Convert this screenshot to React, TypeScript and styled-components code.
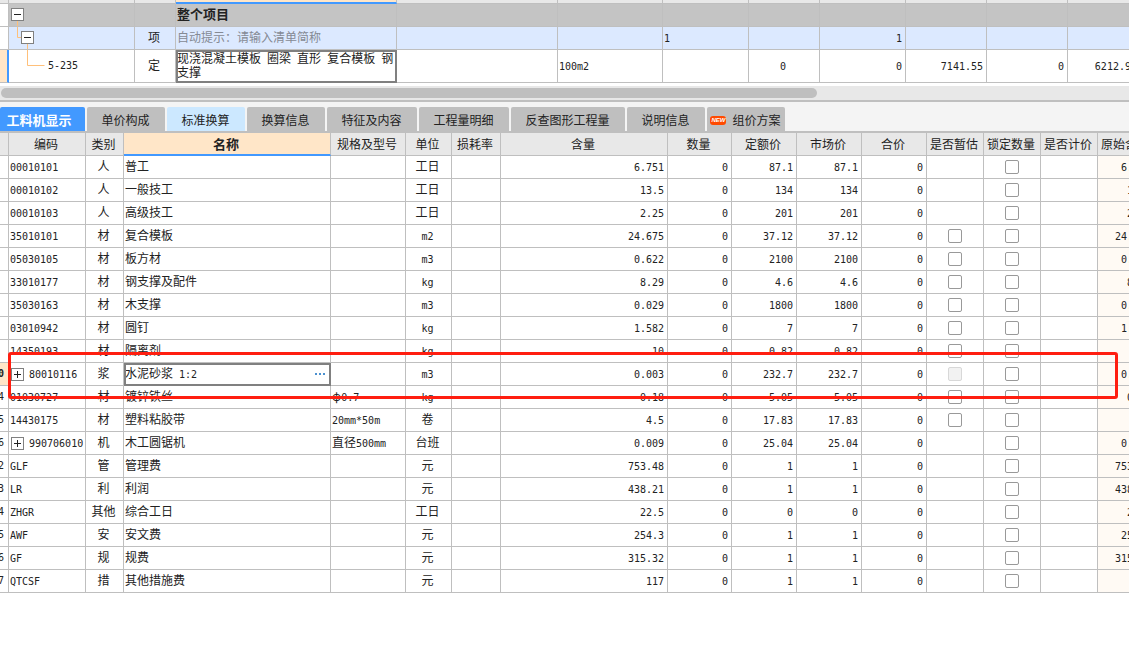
import React from "react";
import styled, { createGlobalStyle, css } from "styled-components";

const LINE = "#bfbfbf";
const BLUE = "#4299ff";
const CREAM = "#ffe6c8";

const GlobalStyle = createGlobalStyle`
  * { box-sizing: border-box; }
  body {
    margin: 0;
    background: #fff;
    color: #222;
    font: 12px/14px "Noto Sans CJK SC", "Noto Sans", sans-serif;
    overflow: hidden;
  }
`;

const Latin = styled.span`
  font-family: "DejaVu Sans Mono", monospace;
  font-size: 10px;
  line-height: 10px;
`;

/* Half-width characters take half the advance of a Chinese one. */
const Txt = ({ children }: { children: string }) => (
  <>
    {children.split(/([ -~]+)/).map((part, i) =>
      i % 2 ? <Latin key={i}>{part}</Latin> : part
    )}
  </>
);

const Page = styled.main`
  display: flex;
  flex-direction: column;
  width: 100%;
`;

const Pane = styled.section`
  position: relative;
  overflow: hidden;
`;

const Grid = styled.table<{ $width: number }>`
  width: ${(p) => p.$width}px;
  min-width: 100%;
  table-layout: fixed;
  border-collapse: separate;
  border-spacing: 0;
`;

type Align = "left" | "center" | "right";

const Cell = styled.td<{ $align?: Align; $bg?: string; $editing?: boolean }>`
  padding: ${(p) => (p.$align === "center" ? "0 2px 2px 0" : "0 3px 2px 1px")};
  border-right: 1px solid ${LINE};
  border-bottom: 1px solid ${LINE};
  background: ${(p) => p.$bg || "transparent"};
  text-align: ${(p) => p.$align || "left"};
  white-space: nowrap;
  overflow: hidden;
  vertical-align: middle;
  ${(p) =>
    p.$editing &&
    css`
      outline: 2px solid #808080;
      outline-offset: -2px;
    `}
`;

const Row = styled.tr<{ $height: number; $bg?: string }>`
  height: ${(p) => p.$height}px;
  background: ${(p) => p.$bg || "#fff"};
`;

const HeadCell = styled.th<{ $active?: boolean }>`
  padding: 0 2px 0 0;
  border-right: 1px solid ${LINE};
  border-bottom: ${(p) => (p.$active ? `2px solid ${BLUE}` : `1px solid ${LINE}`)};
  background: ${(p) => (p.$active ? CREAM : "#e8e8e8")};
  font-size: ${(p) => (p.$active ? 13 : 12)}px;
  font-weight: ${(p) => (p.$active ? 700 : 400)};
  white-space: nowrap;
  overflow: hidden;
`;

const RowNumber = styled(Cell)<{ $current?: boolean }>`
  padding: 0 4px 0 0;
  background: ${(p) => (p.$current ? CREAM : "#fff")};
  font-weight: ${(p) => (p.$current ? 700 : 400)};
`;

const NumberText = styled.div`
  display: flex;
  justify-content: flex-end;
`;

const Marker = styled(Cell)<{ $current?: boolean }>`
  background: ${(p) => (p.$current ? CREAM : "#fff")};
  ${(p) => p.$current && css`border-right: 2px solid ${BLUE};`}
`;

const Hint = styled.span`
  color: #858a94;
`;

const Title = styled.strong`
  font-size: 13px;
`;

const Wrapped = styled.div`
  margin-right: -3px;
  white-space: normal;
`;

const TreeCell = styled(Cell)`
  padding: 0;
`;

const Tree = styled.svg`
  display: block;
`;

const CodeLine = styled.div`
  display: flex;
  align-items: center;
`;

const Toggle = styled.button`
  display: grid;
  place-items: center;
  flex: none;
  width: 13px;
  height: 13px;
  margin: 2px 5px 0 1px;
  padding: 0;
  border: 1px solid #808080;
  background: #fff;
`;

const EditLine = styled.div`
  display: flex;
  align-items: center;
  justify-content: space-between;
`;

const MoreButton = styled.button`
  display: flex;
  gap: 2px;
  padding: 2px 2px 0;
  border: 0;
  background: none;
`;

const Dot = styled.span`
  width: 2px;
  height: 2px;
  background: #4a90d0;
`;

const ScrollTrack = styled.div`
  margin-top: 3px;
  padding: 2px 1px;
  height: 14px;
  background: #e8e8e8;
`;

const ScrollThumb = styled.div`
  width: 72.4%;
  height: 10px;
  border-radius: 5px;
  background: #bfbfbf;
`;

const TabBar = styled.nav`
  display: flex;
  align-items: flex-end;
  gap: 2px;
  height: 33px;
  border-top: 2px solid ${LINE};
  border-bottom: 2px solid ${LINE};
  background: #f4f4f4;
`;

const Tab = styled.button<{ $kind?: "active" | "hover"; $width: number }>`
  display: flex;
  align-items: center;
  justify-content: center;
  gap: 6px;
  width: ${(p) => p.$width}px;
  height: 24px;
  padding: ${(p) => (p.$kind === "active" ? "2px 7px 0 0" : "2px 1px 0 0")};
  border: 0;
  border-radius: 2px 2px 0 0;
  background: ${(p) =>
    p.$kind === "active" ? BLUE : p.$kind === "hover" ? "#cce8ff" : "#bfbfbf"};
  color: ${(p) => (p.$kind === "active" ? "#fff" : "#222")};
  font: inherit;
  font-weight: ${(p) => (p.$kind === "active" ? 700 : 400)};
  font-size: ${(p) => (p.$kind === "active" ? 13 : 12)}px;
  white-space: nowrap;
`;

const Badge = styled.span`
  width: 16px;
  height: 9px;
  border-radius: 3px;
  background: #ff4a00;
  color: #fff;
  font: italic 700 6px/9px "Liberation Sans", sans-serif;
  text-align: center;
`;

const Check = styled.input`
  appearance: none;
  display: block;
  width: 14px;
  height: 14px;
  margin: 2px auto 0;
  border: 1px solid #999;
  border-radius: 2px;
  background: #fff;
  &:disabled {
    border-color: #d8d8d8;
    background: #f2f2f2;
  }
`;

const CheckCell = styled(Cell)`
  padding: 0 0 2px;
`;

const Highlight = styled.div`
  position: absolute;
  top: 219px;
  left: 8px;
  right: 11px;
  height: 47px;
  border: 3px solid #ff1e10;
  border-radius: 3px;
  pointer-events: none;
`;

const TOP_COLS = [9, 126, 41, 221, 161, 105, 86, 71, 86, 81, 81, 73];
const COLS = [9, 77, 38, 207, 75, 46, 49, 167, 64, 65, 65, 65, 57, 57, 57, 57];
const sum = (list: number[]) => list.reduce((a, b) => a + b, 0);

const HEADERS = ["", "编码", "类别", "名称", "规格及型号", "单位", "损耗率", "含量", "数量", "定额价", "市场价", "合价", "是否暂估", "锁定数量", "是否计价", "原始含量"];

type Item = {
  no: string; code: string; kind: string; name: string; spec?: string;
  unit: string; amount: string; price: string;
  estimate?: "on" | "disabled"; group?: boolean; current?: boolean;
};

const ITEMS: Item[] = [
  { no: "", code: "00010101", kind: "人", name: "普工", unit: "工日", amount: "6.751", price: "87.1" },
  { no: "", code: "00010102", kind: "人", name: "一般技工", unit: "工日", amount: "13.5", price: "134" },
  { no: "", code: "00010103", kind: "人", name: "高级技工", unit: "工日", amount: "2.25", price: "201" },
  { no: "", code: "35010101", kind: "材", name: "复合模板", unit: "m2", amount: "24.675", price: "37.12", estimate: "on" },
  { no: "", code: "05030105", kind: "材", name: "板方材", unit: "m3", amount: "0.622", price: "2100", estimate: "on" },
  { no: "", code: "33010177", kind: "材", name: "钢支撑及配件", unit: "kg", amount: "8.29", price: "4.6", estimate: "on" },
  { no: "", code: "35030163", kind: "材", name: "木支撑", unit: "m3", amount: "0.029", price: "1800", estimate: "on" },
  { no: "", code: "03010942", kind: "材", name: "圆钉", unit: "kg", amount: "1.582", price: "7", estimate: "on" },
  { no: "", code: "14350193", kind: "材", name: "隔离剂", unit: "kg", amount: "10", price: "0.82", estimate: "on" },
  { no: "0", code: "80010116", kind: "浆", name: "水泥砂浆 1:2", unit: "m3", amount: "0.003", price: "232.7", estimate: "disabled", group: true, current: true },
  { no: "4", code: "01030727", kind: "材", name: "镀锌铁丝", spec: "φ0.7", unit: "kg", amount: "0.18", price: "5.05", estimate: "on" },
  { no: "5", code: "14430175", kind: "材", name: "塑料粘胶带", spec: "20mm*50m", unit: "卷", amount: "4.5", price: "17.83", estimate: "on" },
  { no: "6", code: "990706010", kind: "机", name: "木工圆锯机", spec: "直径500mm", unit: "台班", amount: "0.009", price: "25.04", group: true },
  { no: "2", code: "GLF", kind: "管", name: "管理费", unit: "元", amount: "753.48", price: "1" },
  { no: "3", code: "LR", kind: "利", name: "利润", unit: "元", amount: "438.21", price: "1" },
  { no: "4", code: "ZHGR", kind: "其他", name: "综合工日", unit: "工日", amount: "22.5", price: "0" },
  { no: "5", code: "AWF", kind: "安", name: "安文费", unit: "元", amount: "254.3", price: "1" },
  { no: "6", code: "GF", kind: "规", name: "规费", unit: "元", amount: "315.32", price: "1" },
  { no: "7", code: "QTCSF", kind: "措", name: "其他措施费", unit: "元", amount: "117", price: "1" },
];

const TABS: { label: string; width: number; kind?: "active" | "hover"; isNew?: boolean }[] = [
  { label: "工料机显示", width: 85, kind: "active" },
  { label: "单价构成", width: 78 },
  { label: "标准换算", width: 78, kind: "hover" },
  { label: "换算信息", width: 78 },
  { label: "特征及内容", width: 90 },
  { label: "工程量明细", width: 90 },
  { label: "反查图形工程量", width: 114 },
  { label: "说明信息", width: 78 },
  { label: "组价方案", width: 78, isNew: true },
];

const Columns = ({ widths }: { widths: number[] }) => (
  <colgroup>
    {widths.map((w, i) => (
      <col key={i} width={w} />
    ))}
  </colgroup>
);

const Num = ({ value, bg }: { value: string; bg?: string }) => (
  <Cell $align="right" $bg={bg}>
    <Txt>{value}</Txt>
  </Cell>
);

const Blank = ({ count }: { count: number }) => (
  <>
    {Array.from({ length: count }, (_, i) => (
      <Cell key={i} />
    ))}
  </>
);

const MinusBox = ({ x, y }: { x: number; y: number }) => (
  <>
    <rect x={x + 0.5} y={y + 0.5} width="12" height="12" fill="#fff" stroke="#808080" />
    <path d={`M${x + 3} ${y + 6.5}h7`} stroke="#222" />
  </>
);

const SliverHead = styled.th<{ $active?: boolean }>`
  height: 4px;
  padding: 0;
  border-right: 1px solid ${LINE};
  border-bottom: ${(p) => (p.$active ? `2px solid ${BLUE}` : `1px solid ${LINE}`)};
  background: ${(p) => (p.$active ? CREAM : "#e8e8e8")};
`;

const ProjectGrid = () => (
  <Pane>
    <Grid $width={sum(TOP_COLS)}>
      <Columns widths={TOP_COLS} />
      <thead>
        <tr>
          {TOP_COLS.map((_, i) => (
            <SliverHead key={i} $active={i === 3} />
          ))}
        </tr>
      </thead>
      <tbody>
        <Row $height={23} $bg="#c4c4c4">
          <Marker />
          <TreeCell>
            <Tree width="125" height="22" fill="none">
              <path d="M8.500 17v5" stroke="#ffc07a" />
              <MinusBox x={2} y={4} />
            </Tree>
          </TreeCell>
          <Cell />
          <Cell><Title>整个项目</Title></Cell>
          <Blank count={8} />
        </Row>
        <Row $height={23} $bg="#dce9ff">
          <Marker />
          <TreeCell>
            <Tree width="125" height="22" fill="none">
              <path d="M8.500 0v10.500h4M18.500 17v5" stroke="#ffc07a" />
              <MinusBox x={12} y={4} />
            </Tree>
          </TreeCell>
          <Cell $align="center">项</Cell>
          <Cell><Hint>自动提示：请输入清单简称</Hint></Cell>
          <Blank count={2} />
          <Cell><Txt>1</Txt></Cell>
          <Cell />
          <Num value="1" />
          <Blank count={3} />
        </Row>
        <Row $height={33}>
          <Marker $current />
          <TreeCell>
            <CodeLine>
              <Tree width="39" height="32" fill="none">
                <path d="M18.500 0v15.500h17" stroke="#ffc07a" />
              </Tree>
              <Txt>5-235</Txt>
            </CodeLine>
          </TreeCell>
          <Cell $align="center">定</Cell>
          <Cell $editing>
            <Wrapped><Txt>现浇混凝土模板 圈梁 直形 复合模板 钢支撑</Txt></Wrapped>
          </Cell>
          <Cell />
          <Cell><Txt>100m2</Txt></Cell>
          <Cell />
          <Cell $align="center"><Txt>0</Txt></Cell>
          <Num value="0" />
          <Num value="7141.55" />
          <Num value="0" />
          <Num value="6212.93" />
        </Row>
      </tbody>
    </Grid>
    <ScrollTrack>
      <ScrollThumb />
    </ScrollTrack>
  </Pane>
);

const ResourceRow = ({ item }: { item: Item }) => (
  <Row $height={23}>
    <RowNumber $current={item.current}>
      <NumberText><Txt>{item.no}</Txt></NumberText>
    </RowNumber>
    <Cell>
      <CodeLine>
        {item.group && (
          <Toggle aria-label={`展开 ${item.code}`}>
            <svg width="9" height="9" fill="none" stroke="#222">
              <path d="M1 4.500h7M4.500 1v7" />
            </svg>
          </Toggle>
        )}
        <span><Txt>{item.code}</Txt></span>
      </CodeLine>
    </Cell>
    <Cell $align="center">{item.kind}</Cell>
    <Cell $editing={item.current}>
      {item.current ? (
        <EditLine>
          <span><Txt>{item.name}</Txt></span>
          <MoreButton aria-label="更多"><Dot /><Dot /><Dot /></MoreButton>
        </EditLine>
      ) : (
        item.name
      )}
    </Cell>
    <Cell><Txt>{item.spec || ""}</Txt></Cell>
    <Cell $align="center"><Txt>{item.unit}</Txt></Cell>
    <Cell />
    <Num value={item.amount} />
    <Num value="0" />
    <Num value={item.price} />
    <Num value={item.price} />
    <Num value="0" />
    <CheckCell>
      {item.estimate && (
        <Check type="checkbox" aria-label={`是否暂估 ${item.code}`} disabled={item.estimate === "disabled"} />
      )}
    </CheckCell>
    <CheckCell>
      <Check type="checkbox" aria-label={`锁定数量 ${item.code}`} />
    </CheckCell>
    <Cell />
    <Num value={item.amount} bg="#fffaf4" />
  </Row>
);

export default function App() {
  return (
    <>
      <GlobalStyle />
      <Page>
        <ProjectGrid />
        <TabBar>
          {TABS.map((tab) => (
            <Tab key={tab.label} $kind={tab.kind} $width={tab.width}>
              {tab.isNew && <Badge>NEW</Badge>}
              {tab.label}
            </Tab>
          ))}
        </TabBar>
        <Pane>
          <Grid $width={sum(COLS)}>
            <Columns widths={COLS} />
            <thead>
              <Row $height={23}>
                {HEADERS.map((label, i) => (
                  <HeadCell key={i} $active={label === "名称"}>{label}</HeadCell>
                ))}
              </Row>
            </thead>
            <tbody>
              {ITEMS.map((item) => (
                <ResourceRow key={item.code} item={item} />
              ))}
            </tbody>
          </Grid>
          <Highlight />
        </Pane>
      </Page>
    </>
  );
}
